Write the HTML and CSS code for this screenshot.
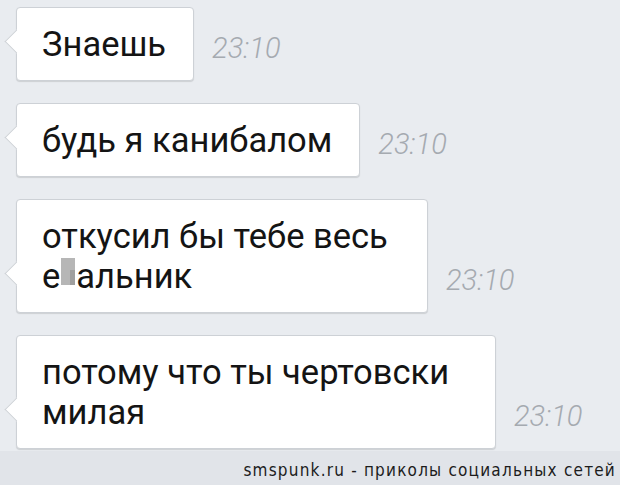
FILE: index.html
```html
<!DOCTYPE html>
<html lang="ru">
<head>
    <meta charset="UTF-8">
    <meta name="viewport" content="width=device-width, initial-scale=1.0">
    <title>Переписка</title>
    <link rel="stylesheet" href="styles.css">
</head>
<body>
    <div class="chat">
        <div class="message">
            <div class="bubble">Знаешь</div>
            <span class="time">23:10</span>
        </div>

        <div class="message">
            <div class="bubble">будь я канибалом</div>
            <span class="time">23:10</span>
        </div>

        <div class="message">
            <div class="bubble bubble-mid">откусил бы тебе весь<br>е<span class="censor"></span>альник</div>
            <span class="time">23:10</span>
        </div>

        <div class="message">
            <div class="bubble bubble-wide">потому что ты чертовски<br>милая</div>
            <span class="time">23:10</span>
        </div>
    </div>

    <footer class="watermark">smspunk.ru - приколы социальных сетей</footer>
</body>
</html>
```

FILE: styles.css
```css
/* Общие стили */
body {
    margin: 0;
    padding: 0;
    background: #e9ecf0;
    font-family: 'Roboto', 'Liberation Sans', sans-serif;
    height: 485px;
    overflow: hidden;
    display: flex;
    flex-direction: column;
}

.chat {
    padding: 7px 0 0 16px;
    display: flex;
    flex-direction: column;
    gap: 22px;
}

.message {
    display: flex;
    align-items: flex-end;
    gap: 18px;
}

.bubble {
    position: relative;
    background: #fff;
    border: 1px solid #cdd1d6;
    border-radius: 4px;
    box-shadow: 0 1px 1px rgba(0, 0, 0, 0.12);
    padding: 16px 27px 16px 25px;
    font-size: 34.5px;
    line-height: 40px;
    color: #141414;
    white-space: nowrap;
}

/* хвостик пузыря */
.bubble::before {
    content: "";
    position: absolute;
    left: -9px;
    bottom: 30px;
    width: 16px;
    height: 16px;
    background: #fff;
    border-left: 1px solid #cdd1d6;
    border-bottom: 1px solid #cdd1d6;
    transform: rotate(45deg);
}

.bubble-mid {
    width: 358px;
}

.bubble-wide {
    width: 426px;
}

.censor {
    display: inline-block;
    width: 14px;
    height: 27px;
    margin: 0 1px;
    vertical-align: 3px;
    background:
        linear-gradient(#9f9f9f, #9f9f9f) right bottom / 5px 15px no-repeat,
        #b6b6b6;
}

.time {
    font-size: 29px;
    font-weight: 300;
    font-style: italic;
    color: #a5aab0;
    line-height: 32px;
    margin-bottom: 17px;
}

.watermark {
    margin-top: auto;
    height: 34px;
    background: #e1e4e9;
    font-family: 'DejaVu Sans Condensed', 'DejaVu Sans', sans-serif;
    font-size: 17px;
    letter-spacing: 1.2px;
    color: #1c1c1c;
    text-align: right;
    padding-right: 4px;
    line-height: 38px;
}
```
